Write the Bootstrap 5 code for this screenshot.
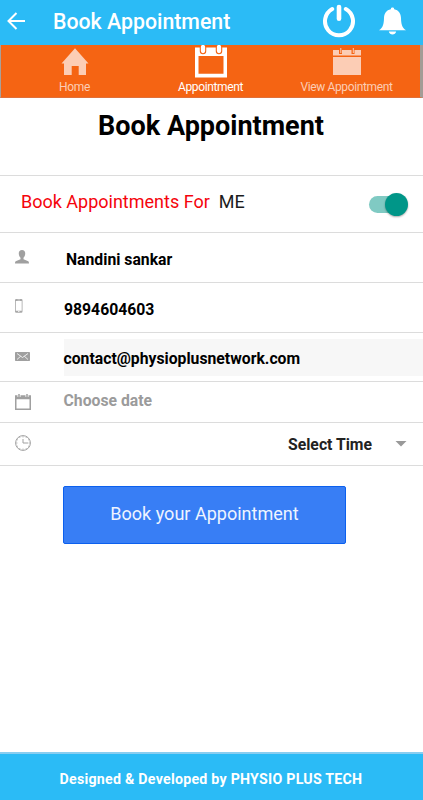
<!DOCTYPE html>
<html lang="en">
<head>
<meta charset="utf-8">
<meta name="viewport" content="width=device-width, initial-scale=1">
<title>Book Appointment</title>
<link href="https://cdn.jsdelivr.net/npm/bootstrap@5.3.0/dist/css/bootstrap.min.css" rel="stylesheet">
<style>
body{font-family:Roboto,"Noto Sans",sans-serif;color:#000;height:800px;overflow:hidden;background:#fff}
svg{display:block;flex:none}
span,h1,h2{white-space:nowrap}
.app-bar{height:45px;background:#2bbbf6;padding:0 17px 4px 7px}
.app-title{font-size:21.3px;font-weight:500;line-height:26px;margin-left:28px;padding-top:3px}
.bell{margin-left:23px}
.tab-bar{height:53px;background:#f56413;border-left:1px solid #a9a09a;border-right:3px solid #a39c96;border-bottom:1px solid #e0703a}
.tab{width:136px;color:#fccdb5;font-size:12px;letter-spacing:-.36px;line-height:16px}
.tab.active{color:#fff}
.tab svg{height:34px}
.line{border-bottom:1px solid #dcdcdc}
.title-block{height:78px;padding-top:10px}
.title-block h1{font-size:27px;font-weight:700;line-height:36px;margin-right:1px}
.for-row{height:57px;padding:0 15px 0 21px;font-size:18px}
.for-row .who{color:#1c1c1c;margin-left:9px}
.for-row>span{padding-bottom:5px}
.red{color:#f5040c}
.toggle{width:39px;height:24px;padding-left:0}
.track{width:34px;height:17px;border-radius:9px;background:#80cac3}
.thumb{width:23px;height:23px;border-radius:50%;background:#009688;margin-left:-18px;box-shadow:0 1px 2px #0005}
.field{font-size:15.75px;font-weight:700;line-height:20px;padding-left:15px}
.ico{width:48.5px;flex:none}
.email{background:#f7f7f7;height:37px;padding-top:10px}
.book{width:283px;height:58px;margin:20px 0 0 63px;background:#387ef5;border:1px solid #0c60ee;border-radius:2px;color:#eef4ff;font-size:18.050px;font-weight:400;padding:0 0 2px}
.foot{height:48px;background:#2bbbf6;border-top:2px solid #89cdf0;font-size:14.2px;letter-spacing:.25px;font-weight:700;padding:6px 1px 0 0}
.r2{height:50px;padding-top:17px}.r2 .ico{width:51px}
.r3{height:50px;padding-top:17px}.r3 .ico{width:49px}
.r3 .ico{margin-top:-1px}
.r4{height:49px;padding-top:6px}.r4 .ico{padding-top:13px}
.r5{height:41px;padding-top:9px}.r5 .ico{padding-top:3px}
.r6{height:43px;padding-top:12px;padding-right:16px}
.hint{color:#9b9b9b}
.sel{color:#222}
.caret{margin:6px 0 0 23px}
</style>
<script src="https://cdn.jsdelivr.net/npm/bootstrap@5.3.0/dist/js/bootstrap.bundle.min.js"></script>
</head>
<body class="d-flex flex-column">
<header class="app-bar d-flex align-items-center text-white">
  <svg width="18" height="18" viewBox="0 0 18 18" fill="none" stroke="#fff" stroke-width="2"><path d="M9.5 1 1.5 9l8 8M1.5 9H18"/></svg>
  <h2 class="app-title mb-0">Book Appointment</h2>
  <svg class="ms-auto" width="34" height="34" viewBox="0 0 34 34" fill="none" stroke="#fff" stroke-linecap="round"><path stroke-width="4" d="M10.200 5A14 14 0 1 0 23.800 5"/><path stroke-width="4.600" d="M17 3v11.700"/></svg>
  <svg width="27" height="28" viewBox="0 0 27 28" fill="#fff" class="bell"><path d="M12 1.600C12 .2 15 .2 15 1.600l.2.7c4.500.9 6.600 4.200 6.800 8.600.2 6 .8 9.300 5 12.400H0c4.200-3.100 4.800-6.400 5-12.400.2-4.400 2.300-7.700 6.800-8.600zM9.800 24.600h7.400c-.7 4-6.700 4-7.400 0z"/></svg>
</header>
<nav class="tab-bar d-flex justify-content-center">
  <div class="tab d-flex flex-column align-items-center"><svg width="28" viewBox="0 0 28 34" fill="#fccdb5"><path d="M14 3.2 27.5 18.5H25V30h-7.3v-9h-7v9H3V18.5H.5z"/></svg><span>Home</span></div>
  <div class="tab active d-flex flex-column align-items-center"><svg width="32" viewBox="0 0 32 34"><path fill="#fff" fill-rule="evenodd" d="M0 2.500h32V32.500H0zM3.500 11v17.800h25V11z"/><path d="M8 2v4M24 2v4" stroke="#f56413" stroke-width="6.500" stroke-linecap="round"/><path d="M8 2v4M24 2v4" stroke="#fff" stroke-width="4.300" stroke-linecap="round"/></svg><span>Appointment</span></div>
  <div class="tab d-flex flex-column align-items-center"><svg width="28" viewBox="0 0 28 34"><path fill="#fccdb5" d="M0 5h28v5.500H0zM0 12h28v18H0z"/><path d="M7.500 5v4M20 5v4" stroke="#f56413" stroke-width="3"/><path d="M7.800 3v5M20.300 3v5" stroke="#fccdb5"/></svg><span>View Appointment</span></div>
</nav>
<main class="flex-grow-1">
  <div class="title-block line text-center"><h1 class="mb-0">Book Appointment</h1></div>
  <div class="for-row line d-flex align-items-center">
    <span class="red">Book Appointments For</span><span class="who">ME</span>
    <div class="toggle d-flex align-items-center ms-auto"><div class="track flex-shrink-0"></div><div class="thumb flex-shrink-0"></div></div>
  </div>
  <div class="field r2 line d-flex"><div class="ico"><svg width="14" height="14" viewBox="0 0 14 14" fill="#a0a0a0"><path d="M7 0c2.300 0 3.400 1.500 3.200 3.700-.1 1.900-.8 3.100-1.700 4v1.600l4.200 1.700c.9.400 1.300 1.100 1.300 2.500H0c0-1.400.4-2.100 1.300-2.500l4.200-1.700V7.700c-.9-.9-1.600-2.100-1.700-4C3.600 1.500 4.700 0 7 0z"/></svg></div><span>Nandini sankar</span></div>
  <div class="field r3 line d-flex"><div class="ico"><svg width="8" height="14" viewBox="0 0 8 14"><path fill="#a8a8a8" fill-rule="evenodd" d="M1.200 0h5.100q1.200 0 1.200 1.200v11.300q0 1.200-1.200 1.200H1.200Q0 13.700 0 12.500V1.200Q0 0 1.200 0zM.8 2v9.700h5.900V2zM2.500.8v.5H5V.8zM3 12.300v.8h1.500v-.8z"/></svg></div><span>9894604603</span></div>
  <div class="field r4 line d-flex"><div class="ico"><svg width="15" height="9" viewBox="0 0 15 9"><rect width="15" height="9" rx=".7" fill="#a0a0a0"/><path d="m2 1.500 5.500 4 5.500-4M2 7.500l3.700-3.300M13 7.500 9.300 4.200" fill="none" stroke="#fff" stroke-width=".8"/></svg></div><div class="email flex-grow-1"><span>contact@physioplusnetwork.com</span></div></div>
  <div class="field r5 line d-flex"><div class="ico"><svg width="16" height="16" viewBox="0 0 16 16"><path fill="#a0a0a0" fill-rule="evenodd" d="M0 1.200h16V16H0zM1.500 5.300v9.200h13V5.300z"/><path d="M4 0v3M12 0v3" stroke="#fff" stroke-width="3"/><path d="M4 0v3M12 0v3" stroke="#a0a0a0" stroke-width="1.500"/></svg></div><span class="hint">Choose date</span></div>
  <div class="field r6 line d-flex"><div class="ico"><svg width="16" height="16" viewBox="0 0 16 16" fill="none" stroke="#a0a0a0"><circle cx="8" cy="8" r="7.400"/><path d="M8 4v4h5"/><path d="M8 1v1.500M8 13.500V15M1 8h1.500M13.500 8H15M4.500 2l.6 1M11.500 2l-.6 1M2 4.500l1 .6M14 4.500l-1 .6M2 11.500l1-.6M14 11.500l-1-.6M4.500 14l.6-1M11.500 14l-.6-1" stroke-width=".7"/></svg></div><span class="sel ms-auto">Select Time</span><svg class="caret" width="12" height="6" viewBox="0 0 12 6"><path d="M.5 0h11L6 5.500z" fill="#999"/></svg></div>
  <button class="btn book d-block" type="button">Book your Appointment</button>
</main>
<footer class="foot d-flex justify-content-center align-items-center text-white"><span>Designed &amp; Developed by PHYSIO PLUS TECH</span></footer>
</body>
</html>
